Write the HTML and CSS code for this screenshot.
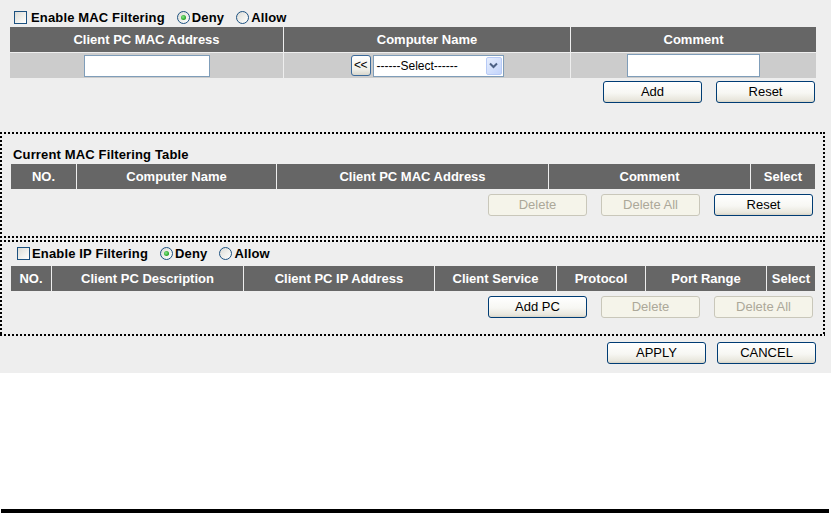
FILE: index.html
```html
<!DOCTYPE html>
<html>
<head>
<meta charset="utf-8">
<link rel="stylesheet" href="styles.css">
</head>
<body>
<div class="page">
  <div class="mac">
    <div class="enable enable-mac">
      <span class="chk"></span><span class="lbl">Enable MAC Filtering</span>
      <span class="radio on"></span><span class="lbl">Deny</span>
      <span class="radio"></span><span class="lbl">Allow</span>
    </div>
    <table class="grid grid-mac">
      <colgroup><col style="width:273px"><col style="width:286px"><col style="width:245px"></colgroup>
      <tr><th>Client PC MAC Address</th><th>Computer Name</th><th>Comment</th></tr>
      <tr>
        <td><span class="txt"></span></td>
        <td><span class="combo"><span class="mini">&lt;&lt;</span><span class="sel"><span class="sel-text">------Select------</span><span class="arr"><svg width="9" height="7" viewBox="0 0 9 7"><path d="M1 1.5 L4.5 5 L8 1.5" fill="none" stroke="#4d6185" stroke-width="2"/></svg></span></span></span></td>
        <td><span class="txt txt-wide"></span></td>
      </tr>
    </table>
    <div class="btns btns-mac">
      <button class="btn">Add</button>
      <button class="btn">Reset</button>
    </div>
  </div>

  <div class="box box-one">
    <div class="title">Current MAC Filtering Table</div>
    <table class="grid grid-box">
      <colgroup><col style="width:65px"><col style="width:199px"><col style="width:271px"><col style="width:201px"><col style="width:64px"></colgroup>
      <tr><th>NO.</th><th>Computer Name</th><th>Client PC MAC Address</th><th>Comment</th><th>Select</th></tr>
    </table>
    <div class="btns">
      <button class="btn" disabled>Delete</button>
      <button class="btn" disabled>Delete All</button>
      <button class="btn">Reset</button>
    </div>
  </div>

  <div class="box box-two">
    <div class="enable enable-ip">
      <span class="chk"></span><span class="lbl">Enable IP Filtering</span>
      <span class="radio on"></span><span class="lbl">Deny</span>
      <span class="radio"></span><span class="lbl">Allow</span>
    </div>
    <table class="grid grid-box grid-ip">
      <colgroup><col style="width:40px"><col style="width:191px"><col style="width:190px"><col style="width:121px"><col style="width:88px"><col style="width:120px"><col style="width:48px"></colgroup>
      <tr><th>NO.</th><th>Client PC Description</th><th>Client PC IP Address</th><th>Client Service</th><th>Protocol</th><th>Port Range</th><th>Select</th></tr>
    </table>
    <div class="btns">
      <button class="btn">Add PC</button>
      <button class="btn" disabled>Delete</button>
      <button class="btn" disabled>Delete All</button>
    </div>
  </div>

  <div class="btns final">
    <button class="btn">APPLY</button>
    <button class="btn">CANCEL</button>
  </div>
</div>
<div class="rule"></div>
</body>
</html>
```
FILE: styles.css
```css
* { box-sizing: border-box; }
body {
  margin: 0;
  background: #fff;
  font-family: "Liberation Sans", Arial, sans-serif;
  color: #000;
}
.page {
  background: #eeeeee;
  height: 373px;
  width: 831px;
}
.enable {
  display: flex;
  align-items: center;
  font-size: 13px;
  font-weight: bold;
  line-height: 15px;
  letter-spacing: 0.15px;
}
.enable-mac {
  height: 26px;
  padding-top: 8px;
  padding-left: 14px;
}
.enable-ip {
  height: 22px;
  padding-left: 15px;
}
.chk {
  width: 13px;
  height: 13px;
  border: 1px solid #1c5180;
  background: linear-gradient(135deg, #dcdcd7 0%, #f5f5f2 70%, #ffffff 100%);
  margin-right: 4px;
  flex: none;
}
.enable-ip .chk { margin-right: 2px; }
.radio {
  width: 13px;
  height: 13px;
  border-radius: 50%;
  border: 1px solid #1c5180;
  background: linear-gradient(135deg, #dcdcd7 0%, #f5f5f2 70%, #ffffff 100%);
  margin-left: 12px;
  margin-right: 2px;
  display: flex;
  align-items: center;
  justify-content: center;
  flex: none;
}
.radio.on::after {
  content: "";
  width: 5px;
  height: 5px;
  border-radius: 50%;
  background: radial-gradient(circle at 40% 40%, #8ae88a 0%, #21a121 70%);
}
.grid {
  border-collapse: separate;
  border-spacing: 1px;
  table-layout: fixed;
}
.grid-mac {
  width: 808px;
  margin-left: 9px;
}
.grid-box {
  width: 806px;
  margin-left: 8px;
}
.grid th {
  background: #666666;
  color: #ffffff;
  font-size: 13px;
  font-weight: bold;
  height: 25px;
  padding: 0;
  text-align: center;
  vertical-align: middle;
  white-space: nowrap;
  overflow: hidden;
}
.grid td {
  background: #cccccc;
  height: 25px;
  padding: 0;
  text-align: center;
  vertical-align: middle;
  font-size: 12px;
}
.txt {
  display: inline-block;
  vertical-align: middle;
  width: 126px;
  height: 22px;
  border: 1px solid #7f9db9;
  background: #fff;
}
.txt-wide {
  width: 133px;
  height: 23px;
}
.combo {
  display: inline-flex;
  align-items: center;
  vertical-align: middle;
  gap: 2px;
}
.mini {
  width: 20px;
  height: 21px;
  border: 1px solid #3c6a9a;
  border-radius: 3px;
  background: linear-gradient(#ffffff, #f0f0ea 70%, #d8d6cc);
  font-size: 12px;
  line-height: 19px;
  text-align: center;
  letter-spacing: -0.5px;
}
.sel {
  width: 131px;
  height: 22px;
  border: 1px solid #7f9db9;
  background: #fff;
  display: flex;
  align-items: center;
  padding-left: 3px;
  padding-right: 1px;
  font-size: 12px;
}
.sel-text { flex: 1; text-align: left; }
.arr {
  width: 16px;
  height: 18px;
  border: 1px solid #b7caf6;
  border-radius: 2px;
  background: linear-gradient(135deg, #e6eefd, #c3d4fb);
  display: flex;
  align-items: center;
  justify-content: center;
}
.btns {
  display: flex;
  justify-content: flex-end;
  gap: 14px;
}
.btns-mac {
  margin-top: 2px;
  padding-right: 16px;
}
.btn {
  width: 99px;
  height: 22px;
  border: 1px solid #003c74;
  border-radius: 3px;
  background: linear-gradient(#ffffff 0%, #f7f7f3 55%, #e8e6dc 90%, #d6d3c6 100%);
  font-family: "Liberation Sans", Arial, sans-serif;
  font-size: 13px;
  color: #000;
  padding: 0;
  line-height: 20px;
}
.btn:disabled {
  border-color: #c9c7ba;
  background: #f5f4ea;
  color: #aca899;
}
.box {
  width: 825px;
  padding-left: 2px;
  padding-right: 2px;
  background:
    repeating-linear-gradient(90deg, #000 0 2px, transparent 2px 4px) left top / 100% 2px no-repeat,
    repeating-linear-gradient(90deg, #000 0 2px, transparent 2px 4px) left bottom / 100% 2px no-repeat,
    repeating-linear-gradient(180deg, #000 0 2px, transparent 2px 4px) left top / 2px 100% no-repeat,
    repeating-linear-gradient(180deg, #000 0 2px, transparent 2px 4px) right top / 2px 100% no-repeat;
}
.box-one {
  margin-top: 29px;
  padding-top: 15px;
  padding-bottom: 22px;
}
.box-one .btns, .box-two .btns {
  margin-top: 4px;
  padding-right: 10px;
}
.title {
  font-size: 13px;
  font-weight: bold;
  line-height: 16px;
  padding-left: 11px;
  letter-spacing: 0.15px;
}
.box-two {
  margin-top: 2px;
  padding-top: 2px;
  padding-bottom: 18px;
}
.grid-ip {
  margin-top: 1px;
}
.final {
  margin-top: 6px;
  padding-right: 15px;
  gap: 11px;
}
.rule {
  margin-top: 136px;
  margin-left: 1px;
  width: 828px;
  height: 4px;
  background: #000;
}
```
